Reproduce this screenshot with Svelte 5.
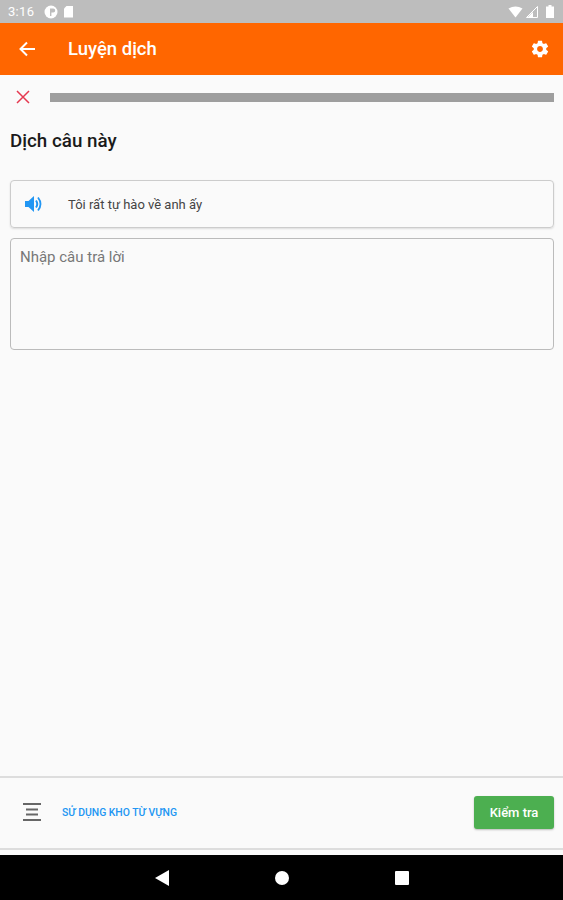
<script>
  const placeholder = 'Nhập câu trả lời';
</script>

<div class="screen">
  <div class="status">
    <span class="time">3:16</span>
    <svg class="st-ic" width="14" height="14" viewBox="0 0 14 14"><circle cx="7" cy="7" r="6.500" fill="#fff"/><path d="M6 3.500h3.200a2 2 0 0 1 0 4H7.400V11H6z" fill="#bdbdbd"/></svg>
    <svg class="st-ic" width="11" height="13" viewBox="0 0 11 13"><path d="M3.500 1H10v11.500H1V3.500z" fill="#fff"/></svg>
    <span class="spacer"></span>
    <svg width="15" height="12" viewBox="0 0 15 12"><path d="M0.500 2.500Q7.500 -1.500 14.500 2.500L7.500 11.500z" fill="#fff"/></svg>
    <svg class="sig" width="12" height="12" viewBox="0 0 12 12"><path d="M11.500 .500V11.500H.5z" fill="none" stroke="#fff"/><path d="M7 6V11.500H1.500z" fill="#fff"/></svg>
    <svg class="bat" width="8" height="13" viewBox="0 0 8 13"><path d="M2.500 0h3v1.500H8V13H0V1.500h2.500z" fill="#fff"/></svg>
  </div>

  <header class="bar">
    <svg class="back" width="18" height="18" viewBox="0 0 18 18"><path d="M17 9H3M9 2.500 2.500 9 9 15.500" fill="none" stroke="#fff" stroke-width="2"/></svg>
    <h1>Luyện dịch</h1>
    <svg class="gear" width="20" height="20" viewBox="0 0 24 24"><path fill="#fff" d="M19.430 12.980c.04-.32.07-.64.07-.98s-.03-.66-.07-.98l2.110-1.650c.19-.15.240-.42.120-.64l-2-3.460c-.12-.22-.39-.3-.61-.22l-2.490 1c-.52-.4-1.080-.73-1.690-.98l-.38-2.650C14.460 2.180 14.250 2 14 2h-4c-.25 0-.46.18-.49.42l-.38 2.650c-.61.25-1.170.59-1.690.98l-2.490-1c-.23-.09-.49 0-.61.22l-2 3.460c-.13.22-.07.49.12.64l2.110 1.650c-.04.32-.07.65-.07.98s.03.66.07.98l-2.110 1.650c-.19.15-.24.42-.12.64l2 3.460c.12.22.39.3.61.22l2.490-1c.52.4 1.080.73 1.690.98l.38 2.650c.03.24.24.42.49.42h4c.25 0 .46-.18.49-.42l.38-2.650c.61-.25 1.170-.59 1.690-.98l2.490 1c.23.09.49 0 .61-.22l2-3.460c.12-.22.07-.49-.12-.64l-2.110-1.650zM12 15.500c-1.930 0-3.500-1.570-3.500-3.500s1.570-3.500 3.500-3.500 3.500 1.570 3.500 3.500-1.570 3.500-3.500 3.500z"/></svg>
  </header>

  <main>
    <div class="progress">
      <svg width="14" height="14" viewBox="0 0 14 14"><path d="M1 1 13 13M13 1 1 13" stroke="#e53950" stroke-width="1.500" fill="none"/></svg>
      <div class="track"></div>
    </div>
    <h2>Dịch câu này</h2>
    <div class="prompt">
      <svg width="18" height="18" viewBox="0 0 18 18"><path d="M0 6V12H3.500L9 17V1L3.500 6z" fill="#2196f3"/><path d="M11 5.500Q13.500 9 11 12.500" fill="none" stroke="#2196f3" stroke-width="2"/><path d="M13 2.500Q18 9 13 15.500" fill="none" stroke="#2196f3" stroke-width="1.800"/></svg>
      <span>Tôi rất tự hào về anh ấy</span>
    </div>
    <div class="answer">{placeholder}</div>
  </main>

  <div class="footer">
    <svg width="18" height="18" viewBox="0 0 18 18"><path d="M0 1H18M3 6.500H15M3 11.500H15M0 17H18" stroke="#666" stroke-width="2" fill="none"/></svg>
    <span class="kho">SỬ DỤNG KHO TỪ VỰNG</span>
    <button>Kiểm tra</button>
  </div>

  <nav>
    <svg width="14" height="16" viewBox="0 0 14 16"><path d="M14 0V16L0 8z" fill="#fff"/></svg>
    <svg width="14" height="14" viewBox="0 0 14 14"><circle cx="7" cy="7" r="7" fill="#fff"/></svg>
    <svg width="14" height="14" viewBox="0 0 14 14"><rect width="14" height="14" rx="1" fill="#fff"/></svg>
  </nav>
</div>

<style>
  :global(body) { margin: 0; background: #fafafa; }
  .screen { width: 563px; height: 900px; display: flex; flex-direction: column;
    font-family: Roboto, "Noto Sans", sans-serif; background: #fafafa; overflow: hidden; }
  .status { height: 23px; background: #bdbdbd; display: flex; align-items: center;
    padding: 0 9px 0 8px; gap: 5px; color: #fff; font-size: 13px; box-sizing: border-box; }
  .time { margin-right: 5px; letter-spacing: .3px; }
  .spacer { flex: 1; }
  .status .sig { margin-left: -2px; }
  .status .bat { margin-left: 3px; }
  .bar { height: 52px; background: #ff6600; display: flex; align-items: center;
    padding: 0 13px 0 18px; color: #fff; }
  .bar h1 { margin: 0 0 0 32px; font-size: 18.500px; font-weight: 500; flex: 1; }
  main { flex: 1; display: flex; flex-direction: column; padding: 0 9px 0 10px; }
  .progress { height: 44px; display: flex; align-items: center; gap: 20px; padding-left: 6px; }
  .track { flex: 1; height: 9px; background: #9e9e9e; }
  h2 { margin: 0; font-size: 18.800px; font-weight: 500; color: #1a1a1a; line-height: 20px; padding-top: 12px; }
  .prompt { margin-top: 29px; height: 48px; box-sizing: border-box; border: 1.500px solid #ccc;
    border-radius: 4px; display: flex; align-items: center; padding-left: 14px; gap: 25px;
    box-shadow: 0 1px 2px rgba(0,0,0,.12); font-size: 13px; color: #444; }
  .answer { margin-top: 10px; height: 112px; box-sizing: border-box; border: 1.500px solid #bbb;
    border-radius: 4px; padding: 9px; font-size: 15px; color: #777; }
  .footer { height: 74px; margin-bottom: 5px; border-top: 2px solid #ddd; border-bottom: 2px solid #ddd;
    box-sizing: border-box; display: flex; align-items: center; padding: 0 9px 2px 23px; }
  .kho { margin-left: 21px; flex: 1; font-size: 10.400px; font-weight: 500; color: #2196f3; }
  button { width: 80px; height: 33px; border: 0; border-radius: 3px; background: #4caf50;
    color: #fff; font: 500 13px Roboto, sans-serif; box-shadow: 0 1px 2px rgba(0,0,0,.25); }
  nav { height: 45px; background: #000; display: flex; align-items: center; justify-content: center; gap: 106px; }
</style>
